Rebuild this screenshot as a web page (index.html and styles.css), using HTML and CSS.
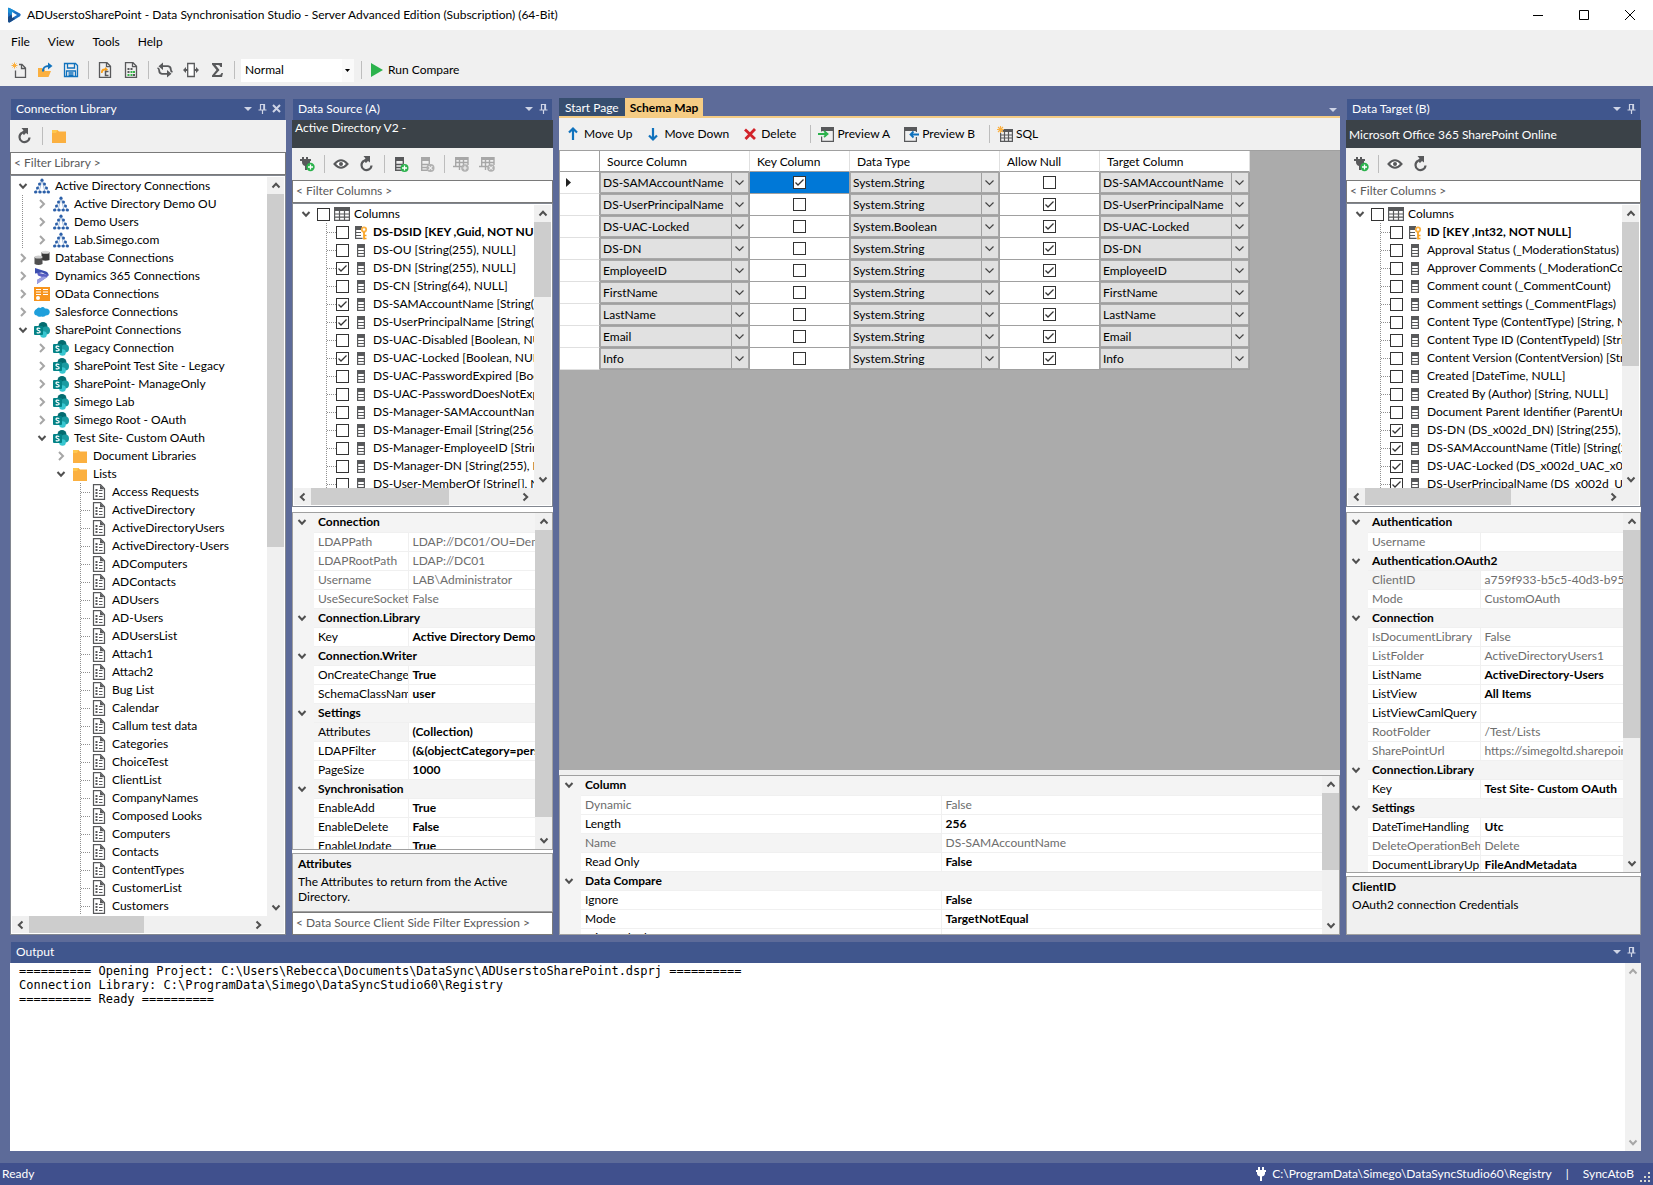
FILE: index.html
```html
<!DOCTYPE html>
<html lang="en">
<head>
<meta charset="utf-8">
<title>ADUserstoSharePoint - Data Synchronisation Studio</title>
<link rel="stylesheet" href="styles.css">
</head>
<body>
<svg class="sprite" aria-hidden="true">
  <symbol id="logo" viewBox="0 0 16 16"><path d="M2 1.5Q2 .2 3.4.9L14 6.6Q15.600 8 14 9.200L4 15.200Q2 16 2 14Z" fill="#1d6fc0"/><path d="M2 1.500Q2 .2 3.400.900L9 4 5 8 2 5Z" fill="#1b8fd6"/><path d="M2 10l3-2 4 4-5 3.200Q2 16 2 14Z" fill="#1a4a86"/><path d="M6 5l5 3-5 3Z" fill="#fff"/></symbol>
  <symbol id="new" viewBox="0 0 16 16"><path d="M3.500.5v6M.5 3.500h6M1.500 1.500l4 4M5.500 1.500l-4 4" stroke="#fbb040" fill="none"/><path d="M8 2.500h3l3.500 3.500v9.500h-10V8.500M10.500 2.500V6.500h4" stroke="#58595b" fill="none" stroke-width="1.300"/></symbol>
  <symbol id="open" viewBox="0 0 16 16"><path d="M1 6h4l1 1.500h2V9h6l-2.500 6H1z" fill="#fbb040"/><path d="M6 9.500C6 5 8 4 12 4" fill="none" stroke="#1072bd" stroke-width="2"/><path d="M11 .5L15.500 4 11 7.500z" fill="#1072bd"/></symbol>
  <symbol id="save" viewBox="0 0 16 16"><path d="M1.500 1.500h11l2 2v11h-13zM4.500 1.500v4.500h7V1.500M3.500 14.500V9h9v5.500M5.500 11h5M5.500 13h5" fill="none" stroke="#1072bd" stroke-width="1.300"/></symbol>
  <symbol id="pagec" viewBox="0 0 16 16"><path d="M2.500.7h7.500l3.500 3.500v11.100h-11zM9.500.7v4h4" fill="none" stroke="#58595b" stroke-width="1.300"/><path d="M4 11c0-4 2-4.500 4-4.500V5l3 2.500L8 10V8.500c-1.500 0-2 .5-2.500 2.500z" fill="#f9a01b"/><path d="M11.500 9.500h-3v4h3" fill="none" stroke="#58595b" stroke-width="1.500"/></symbol>
  <symbol id="pagegrid" viewBox="0 0 16 16"><path d="M2.500.7h7.500l3.500 3.500v11.100h-11zM9.500.7v4h4" fill="none" stroke="#58595b" stroke-width="1.300"/><path d="M4.500 6h2v2h-2zM7.500 6h2v2h-2zM4.500 9h2v2h-2zM10 12h2v2h-2z" fill="#58595b"/><path d="M7.500 9h2v2h-2zM10 9h2v2h-2zM7.500 12h2v2h-2zM4.500 12h2v2h-2z" fill="#39b54a"/></symbol>
  <symbol id="sync" viewBox="0 0 16 16"><path d="M5 4.200h6Q13.800 4.500 13.800 7.500 13.800 9.500 15.500 10" fill="none" stroke="#58595b" stroke-width="1.800"/><path d="M11 11.800H5Q2.200 11.500 2.200 8.500 2.200 6.500.5 6" fill="none" stroke="#58595b" stroke-width="1.800"/><path d="M6 .5v7.400L1.500 4.200zM10 8.100v7.400l4.500-3.700z" fill="#58595b"/></symbol>
  <symbol id="fit" viewBox="0 0 16 16"><path d="M4.700 1.500h6.600v13H4.700z" fill="#fff" stroke="#58595b" stroke-width="1.300"/><path d="M0 8l3-3v2h2v2H3v2zM16 8l-3-3v2h-2v2h2v2z" fill="#58595b"/></symbol>
  <symbol id="sigma" viewBox="0 0 16 16"><path d="M3 1h10v4h-1.500Q11 3 9 3H6.500l4 5-4.500 5H10q2 0 2.500-2H14l-1 4H3v-1.500L7.500 8 3 2.500z" fill="#58595b"/></symbol>
  <symbol id="play" viewBox="0 0 12 14"><path d="M0 0l12 7-12 7z" fill="#2bb24c"/></symbol>
  <symbol id="refresh" viewBox="0 0 16 16"><path d="M5.500 3.800A5 5 0 1 0 13 8.500" fill="none" stroke="#58595b" stroke-width="2.200" transform="translate(-.5 1)"/><path d="M4.500 0h6.500v6.500L9 5 7 7 4 4.500l2.500-2z" fill="#58595b"/></symbol>
  <symbol id="folder" viewBox="0 0 16 16"><path d="M1 2h5.500L8 3.500h7V15H1z" fill="#fbb040"/><path d="M1 2h5.500L5 5H1z" fill="#ffc74d"/></symbol>
  <symbol id="plugadd" viewBox="0 0 16 16"><path d="M3 1h2v2h2V1h2v2h3v2h-1v2q0 3-3 3v4H6v-4Q3 9 3 6V5H1V3h2z" fill="#58595b"/><circle cx="11.500" cy="11" r="4.200" fill="#2bb24c"/><path d="M11.500 8.500v5M9 11h5" stroke="#fff" stroke-width="1.300"/></symbol>
  <symbol id="plug" viewBox="0 0 12 14"><path d="M3 0h2v3h2V0h2v3h2v2h-1v2q-.5 2-3 2.500V14H5V9.500Q2.500 9 2 7V5H1V3h2z" fill="#fff"/></symbol>
  <symbol id="eye" viewBox="0 0 16 16"><path d="M1.500 8Q8 .5 14.500 8 8 15.500 1.500 8z" fill="#fff" stroke="#58595b" stroke-width="2"/><circle cx="8" cy="8" r="2" fill="#58595b"/></symbol>
  <symbol id="coladd" viewBox="0 0 16 16"><path d="M2 1h9v4H2z" fill="#58595b"/><path d="M2.700 2v12.300h6M10.300 2v6M3 8.500h7M3 11.500h5" fill="none" stroke="#58595b" stroke-width="1.400"/><circle cx="11.500" cy="12" r="4" fill="#2bb24c"/><path d="M11.500 9.500v5M9 12h5" stroke="#fff" stroke-width="1.300"/></symbol>
  <symbol id="coldel" viewBox="0 0 16 16"><path d="M2 1h9v4H2z" fill="#a7a7a7"/><path d="M2.700 2v12.300h6M10.300 2v6M3 8.500h7M3 11.500h5" fill="none" stroke="#a7a7a7" stroke-width="1.400"/><circle cx="11.500" cy="12" r="4" fill="#b0b0b0"/><path d="M9.700 10.200l3.600 3.600M13.300 10.200l-3.600 3.600" stroke="#f0f0f0" stroke-width="1.200"/></symbol>
  <symbol id="tabadd" viewBox="0 0 16 16"><path d="M2 1h13v3H2z" fill="#a7a7a7"/><path d="M2.700 1v10M15 1v8M6.500 3v11M10.500 3v6M2 6.500h13M0 10.500h9" fill="none" stroke="#a7a7a7" stroke-width="1.400"/><circle cx="12" cy="12" r="3.800" fill="#b0b0b0"/><path d="M12 9.800v4.400M9.800 12h4.400" stroke="#f0f0f0" stroke-width="1.200"/></symbol>
  <symbol id="tabdel" viewBox="0 0 16 16"><path d="M2 1h13v3H2z" fill="#a7a7a7"/><path d="M2.700 1v10M15 1v8M6.500 3v11M10.500 3v6M2 6.500h13M0 10.500h9" fill="none" stroke="#a7a7a7" stroke-width="1.400"/><circle cx="12" cy="12" r="3.800" fill="#b0b0b0"/><path d="M10.400 10.400l3.200 3.200M13.600 10.400l-3.200 3.200" stroke="#f0f0f0" stroke-width="1.200"/></symbol>
  <symbol id="table" viewBox="0 0 16 16"><path d="M0 1h16v4H0z" fill="#58595b"/><path d="M.6 2v12.400h14.800V2M5.500 5v9M10.500 5v9M1 8h14M1 11.200h14" fill="none" stroke="#58595b" stroke-width="1.200"/></symbol>
  <symbol id="col" viewBox="0 0 16 16"><path d="M4 2h8v3H4z" fill="#58595b"/><path d="M4.600 3v11.400h6.800V3M5 8.500h6M5 11.500h6M5 5.500h6" fill="none" stroke="#58595b" stroke-width="1.200"/></symbol>
  <symbol id="key" viewBox="0 0 16 16"><path d="M2 2h7v3H2z" fill="#58595b"/><path d="M2.600 3v11.400h7M2 8.500h6M2 11.500h6M2 5.500h6" fill="none" stroke="#58595b" stroke-width="1.200"/><circle cx="11" cy="5.500" r="2.200" fill="none" stroke="#fbb040" stroke-width="1.800"/><path d="M11 8v7.500M11 11.500h2.500M11 14.500h2.500" stroke="#f9a01b" stroke-width="1.700"/></symbol>
  <symbol id="doc" viewBox="0 0 16 16"><path d="M2.500.7h7l4 4v10.600h-11z" fill="none" stroke="#58595b" stroke-width="1.200"/><path d="M9 .7v4.500h4.500z" fill="#58595b"/><path d="M4.500 6h2M4.500 9h2M4.500 12h2" stroke="#58595b" stroke-width="1.800"/><path d="M8 6.500h3.500M8 9.500h3.500M8 12.500h3.500" stroke="#58595b"/></symbol>
  <symbol id="ad" viewBox="0 0 16 16"><path d="M8 2L1.500 14h13zM8 2L5 14M8 2l3 12" fill="none" stroke="#a9c0de"/><g fill="#2b5fa8"><circle cx="8" cy="2.200" r="1.600"/><circle cx="5.500" cy="6" r="1.500"/><circle cx="10.500" cy="6" r="1.500"/><circle cx="3.500" cy="10" r="1.500"/><circle cx="12.500" cy="10" r="1.500"/><circle cx="1.600" cy="14" r="1.600"/><circle cx="6" cy="14" r="1.600"/><circle cx="10.200" cy="14" r="1.600"/><circle cx="14.400" cy="14" r="1.600"/></g></symbol>
  <symbol id="db" viewBox="0 0 16 16"><path d="M7.500 2v8q4 1.500 8 0V2z" fill="#3a3a3a"/><ellipse cx="11.500" cy="2.200" rx="4" ry="1.500" fill="#ddd"/><path d="M.5 7v7q4 2 8 0V7z" fill="#505050"/><ellipse cx="4.500" cy="7" rx="4" ry="1.500" fill="#ccc"/></symbol>
  <symbol id="dyn" viewBox="0 0 16 16"><path d="M1 0l11 3.500Q15 5 14.500 8L8 4.500 1 5.500z" fill="#3c4fb0"/><path d="M14.500 6.500Q14 9 11 10.500L3 16v-4l5-3-4-1.500L3 4.500l9 2z" fill="#5a5fc4"/><path d="M3 16v-4l6-3.500 4.500.5z" fill="#9a9ee0"/></symbol>
  <symbol id="odata" viewBox="0 0 16 16"><path d="M0 1h16v14H0z" fill="#f7941d"/><path d="M2 3.500h5M2 6h5M2 8.500h5M9 3.500h5M9 6h5M9 8.500h5" stroke="#fff" stroke-width="1.200"/><circle cx="4" cy="12" r="2" fill="#fff"/></symbol>
  <symbol id="sf" viewBox="0 0 16 16"><path d="M2.500 5Q4 2.500 6.500 4q2.500-2 4.500.5Q15.500 4 15.800 8q-.5 3.500-4 3.500-2 2-4.500 1Q4 13.500 3 11.500-.5 11 .3 7.500.8 5.500 2.500 5z" fill="#1e9fdb"/></symbol>
  <symbol id="sp" viewBox="0 0 16 16"><circle cx="9" cy="4.500" r="4.500" fill="#036c70"/><circle cx="12" cy="8.500" r="4" fill="#1a9ba1"/><circle cx="9.500" cy="12.500" r="3.300" fill="#37c6d0"/><rect y="4" width="9" height="9" rx="1" fill="#038387"/><path d="M6.300 6.500Q3 5.500 3 7.300C3 8.800 6.200 8.200 6.200 10 6 11.400 3.500 11 2.700 10.500" fill="none" stroke="#fff" stroke-width="1.200"/></symbol>
  <symbol id="arrup" viewBox="0 0 16 16"><path d="M8 2v12M4 6.500l4-4 4 4" fill="none" stroke="#1072bd" stroke-width="2.200"/></symbol>
  <symbol id="arrdn" viewBox="0 0 16 16"><path d="M8 2v12M4 9.500l4 4 4-4" fill="none" stroke="#1072bd" stroke-width="2.200"/></symbol>
  <symbol id="cross" viewBox="0 0 16 16"><path d="M3 3.500l10 9.500M13 3l-9.500 10" fill="none" stroke="#d2232a" stroke-width="2.800"/></symbol>
  <symbol id="preva" viewBox="0 0 16 16"><path d="M3 1h13v4H3z" fill="#58595b"/><path d="M3.600 5.500V2M3.600 10.500v4.900h11.800V2" fill="none" stroke="#58595b" stroke-width="1.200"/><path d="M0 8h8M6 5l3.500 3L6 11" fill="none" stroke="#2bb24c" stroke-width="1.800"/></symbol>
  <symbol id="prevb" viewBox="0 0 16 16"><path d="M1 1h13v4H1z" fill="#58595b"/><path d="M1.600 2v13.400h11.800V11M13.400 2v4" fill="none" stroke="#58595b" stroke-width="1.200"/><path d="M16 8.500H8M10.500 5.500L7.500 8.500l3 3" fill="none" stroke="#1072bd" stroke-width="1.800"/></symbol>
  <symbol id="sql" viewBox="0 0 16 16"><path d="M7 3h9v3H4z" fill="#58595b"/><path d="M3.600 7v8.400h11.800V4M7.500 6v9M11.500 6v9M3 9h12M3 12h12" fill="none" stroke="#58595b" stroke-width="1.200"/><path d="M3.500 0v7M0 3.500h7M1 1l5 5M6 1L1 6" stroke="#fbb040" stroke-width="1.100"/></symbol>
  <symbol id="cu" viewBox="0 0 10 10"><path d="M1.500 7L5 3.300 8.500 7" fill="none" stroke="#505050" stroke-width="2"/></symbol>
  <symbol id="cd" viewBox="0 0 10 10"><path d="M1.500 3L5 6.700 8.500 3" fill="none" stroke="#505050" stroke-width="2"/></symbol>
  <symbol id="cl" viewBox="0 0 10 10"><path d="M7 1.500L3.300 5 7 8.500" fill="none" stroke="#505050" stroke-width="2"/></symbol>
  <symbol id="cr" viewBox="0 0 10 10"><path d="M3 1.500L6.700 5 3 8.500" fill="none" stroke="#505050" stroke-width="2"/></symbol>
  <symbol id="er" viewBox="0 0 10 10"><path d="M3 1L7 5 3 9" fill="none" stroke="#a6a6a6" stroke-width="2"/></symbol>
  <symbol id="tri" viewBox="0 0 8 4"><path d="M0 0h8L4 4z" fill="#ced4e6"/></symbol>
  <symbol id="pin" viewBox="0 0 9 10"><path d="M2.500 6V.5h4V6M5.800 0v6M.5 6h8M4.500 6v4" fill="none" stroke="#ced4e6" stroke-width="1.200"/></symbol>
  <symbol id="close" viewBox="0 0 9 9"><path d="M1 1l7 7M8 1L1 8" fill="none" stroke="#ced4e6" stroke-width="2"/></symbol>
</svg>

<div class="app">
<header class="titlebar">
  <svg class="ic"><use href="#logo"/></svg>
  <h1>ADUserstoSharePoint - Data Synchronisation Studio - Server Advanced Edition (Subscription) (64-Bit)</h1>
  <button class="win" aria-label="Minimize"><svg width="10" height="10"><path d="M0 5.500h10" stroke="#000"/></svg></button>
  <button class="win" aria-label="Maximize"><svg width="10" height="10"><path d="M.5.5h9v9h-9z" fill="none" stroke="#000"/></svg></button>
  <button class="win" aria-label="Close"><svg width="10" height="10"><path d="M0 0l10 10M10 0L0 10" stroke="#000"/></svg></button>
</header>
<nav class="menubar"><button>File</button><button>View</button><button>Tools</button><button>Help</button></nav>
<div class="tools main-tools">
  <button aria-label="New"><svg class="ic"><use href="#new"/></svg></button>
  <button aria-label="Open"><svg class="ic"><use href="#open"/></svg></button>
  <button aria-label="Save"><svg class="ic"><use href="#save"/></svg></button>
  <span class="sep"></span>
  <button aria-label="Project properties"><svg class="ic"><use href="#pagec"/></svg></button>
  <button aria-label="Data preview"><svg class="ic"><use href="#pagegrid"/></svg></button>
  <span class="sep"></span>
  <button aria-label="Swap"><svg class="ic"><use href="#sync"/></svg></button>
  <button aria-label="Fit columns"><svg class="ic"><use href="#fit"/></svg></button>
  <button aria-label="Sum"><svg class="ic"><use href="#sigma"/></svg></button>
  <span class="sep"></span>
  <select class="mode" aria-label="Mode"><option>Normal</option></select>
  <span class="sep"></span>
  <button class="run"><svg width="12" height="14"><use href="#play"/></svg>Run Compare</button>
</div>

<main class="work">
<section class="dock">
  <header class="cap"><h2>Connection Library</h2><button aria-label="Options"><svg width="8" height="4"><use href="#tri"/></svg></button><button aria-label="Pin"><svg width="9" height="10"><use href="#pin"/></svg></button><button aria-label="Close"><svg width="9" height="9"><use href="#close"/></svg></button></header>
  <div class="tools">
    <button aria-label="Refresh"><svg class="ic"><use href="#refresh"/></svg></button><span class="sep"></span>
    <button aria-label="Folder"><svg class="ic"><use href="#folder"/></svg></button>
  </div>
  <input class="filter" placeholder="&lt; Filter Library &gt;" aria-label="Filter library">
  <div class="box tree library">
    <ul class="view">
      <li><span class="node"><svg class="ex"><use href="#cd"/></svg><svg class="ic"><use href="#ad"/></svg>Active Directory Connections</span>
        <ul class="line">
          <li><span class="node"><svg class="ex"><use href="#er"/></svg><svg class="ic"><use href="#ad"/></svg>Active Directory Demo OU</span></li>
          <li><span class="node"><svg class="ex"><use href="#er"/></svg><svg class="ic"><use href="#ad"/></svg>Demo Users</span></li>
          <li><span class="node"><svg class="ex"><use href="#er"/></svg><svg class="ic"><use href="#ad"/></svg>Lab.Simego.com</span></li>
        </ul></li>
      <li><span class="node"><svg class="ex"><use href="#er"/></svg><svg class="ic"><use href="#db"/></svg>Database Connections</span></li>
      <li><span class="node"><svg class="ex"><use href="#er"/></svg><svg class="ic"><use href="#dyn"/></svg>Dynamics 365 Connections</span></li>
      <li><span class="node"><svg class="ex"><use href="#er"/></svg><svg class="ic"><use href="#odata"/></svg>OData Connections</span></li>
      <li><span class="node"><svg class="ex"><use href="#er"/></svg><svg class="ic"><use href="#sf"/></svg>Salesforce Connections</span></li>
      <li><span class="node"><svg class="ex"><use href="#cd"/></svg><svg class="ic"><use href="#sp"/></svg>SharePoint Connections</span>
        <ul>
          <li><span class="node"><svg class="ex"><use href="#er"/></svg><svg class="ic"><use href="#sp"/></svg>Legacy Connection</span></li>
          <li><span class="node"><svg class="ex"><use href="#er"/></svg><svg class="ic"><use href="#sp"/></svg>SharePoint Test Site - Legacy</span></li>
          <li><span class="node"><svg class="ex"><use href="#er"/></svg><svg class="ic"><use href="#sp"/></svg>SharePoint- ManageOnly</span></li>
          <li><span class="node"><svg class="ex"><use href="#er"/></svg><svg class="ic"><use href="#sp"/></svg>Simego Lab</span></li>
          <li><span class="node"><svg class="ex"><use href="#er"/></svg><svg class="ic"><use href="#sp"/></svg>Simego Root - OAuth</span></li>
          <li><span class="node"><svg class="ex"><use href="#cd"/></svg><svg class="ic"><use href="#sp"/></svg>Test Site- Custom OAuth</span>
            <ul>
              <li><span class="node"><svg class="ex"><use href="#er"/></svg><svg class="ic"><use href="#folder"/></svg>Document Libraries</span></li>
              <li><span class="node"><svg class="ex"><use href="#cd"/></svg><svg class="ic"><use href="#folder"/></svg>Lists</span>
                <ul class="leaves">
                  <li><svg class="ic"><use href="#doc"/></svg>Access Requests</li>
                  <li><svg class="ic"><use href="#doc"/></svg>ActiveDirectory</li>
                  <li><svg class="ic"><use href="#doc"/></svg>ActiveDirectoryUsers</li>
                  <li><svg class="ic"><use href="#doc"/></svg>ActiveDirectory-Users</li>
                  <li><svg class="ic"><use href="#doc"/></svg>ADComputers</li>
                  <li><svg class="ic"><use href="#doc"/></svg>ADContacts</li>
                  <li><svg class="ic"><use href="#doc"/></svg>ADUsers</li>
                  <li><svg class="ic"><use href="#doc"/></svg>AD-Users</li>
                  <li><svg class="ic"><use href="#doc"/></svg>ADUsersList</li>
                  <li><svg class="ic"><use href="#doc"/></svg>Attach1</li>
                  <li><svg class="ic"><use href="#doc"/></svg>Attach2</li>
                  <li><svg class="ic"><use href="#doc"/></svg>Bug List</li>
                  <li><svg class="ic"><use href="#doc"/></svg>Calendar</li>
                  <li><svg class="ic"><use href="#doc"/></svg>Callum test data</li>
                  <li><svg class="ic"><use href="#doc"/></svg>Categories</li>
                  <li><svg class="ic"><use href="#doc"/></svg>ChoiceTest</li>
                  <li><svg class="ic"><use href="#doc"/></svg>ClientList</li>
                  <li><svg class="ic"><use href="#doc"/></svg>CompanyNames</li>
                  <li><svg class="ic"><use href="#doc"/></svg>Composed Looks</li>
                  <li><svg class="ic"><use href="#doc"/></svg>Computers</li>
                  <li><svg class="ic"><use href="#doc"/></svg>Contacts</li>
                  <li><svg class="ic"><use href="#doc"/></svg>ContentTypes</li>
                  <li><svg class="ic"><use href="#doc"/></svg>CustomerList</li>
                  <li><svg class="ic"><use href="#doc"/></svg>Customers</li>
                </ul></li>
            </ul></li>
        </ul></li>
    </ul>
    <div class="vbar"><svg class="ar"><use href="#cu"/></svg><div class="track"><i style="height:50%"></i></div><svg class="ar"><use href="#cd"/></svg></div>
    <div class="hbar"><svg class="ar"><use href="#cl"/></svg><div class="track"><i style="width:52%"></i></div><svg class="ar"><use href="#cr"/></svg></div>
  </div>
</section>

<section class="dock">
  <header class="cap"><h2>Data Source (A)</h2><button aria-label="Options"><svg width="8" height="4"><use href="#tri"/></svg></button><button aria-label="Pin"><svg width="9" height="10"><use href="#pin"/></svg></button></header>
  <p class="conn top">Active Directory V2 -</p>
  <div class="tools">
    <button aria-label="Connect"><svg class="ic"><use href="#plugadd"/></svg></button><span class="sep"></span>
    <button aria-label="Preview"><svg class="ic"><use href="#eye"/></svg></button>
    <button aria-label="Refresh"><svg class="ic"><use href="#refresh"/></svg></button><span class="sep"></span>
    <button aria-label="Add column"><svg class="ic"><use href="#coladd"/></svg></button>
    <button aria-label="Remove column" disabled><svg class="ic"><use href="#coldel"/></svg></button><span class="sep"></span>
    <button aria-label="Add lookup" disabled><svg class="ic"><use href="#tabadd"/></svg></button>
    <button aria-label="Remove lookup" disabled><svg class="ic"><use href="#tabdel"/></svg></button>
  </div>
  <input class="filter" placeholder="&lt; Filter Columns &gt;" aria-label="Filter source columns">
  <div class="box tree columns">
    <ul class="view">
      <li><span class="node"><svg class="ex"><use href="#cd"/></svg><label><input type="checkbox"><svg class="ic"><use href="#table"/></svg>Columns</label></span>
        <ul class="checks">
          <li><label class="pk"><input type="checkbox"><svg class="ic"><use href="#key"/></svg>DS-DSID [KEY ,Guid, NOT NULL]</label></li>
          <li><label><input type="checkbox"><svg class="ic"><use href="#col"/></svg>DS-OU [String(255), NULL]</label></li>
          <li><label><input type="checkbox" checked><svg class="ic"><use href="#col"/></svg>DS-DN [String(255), NULL]</label></li>
          <li><label><input type="checkbox"><svg class="ic"><use href="#col"/></svg>DS-CN [String(64), NULL]</label></li>
          <li><label><input type="checkbox" checked><svg class="ic"><use href="#col"/></svg>DS-SAMAccountName [String(256), NULL]</label></li>
          <li><label><input type="checkbox" checked><svg class="ic"><use href="#col"/></svg>DS-UserPrincipalName [String(255), NULL]</label></li>
          <li><label><input type="checkbox"><svg class="ic"><use href="#col"/></svg>DS-UAC-Disabled [Boolean, NULL]</label></li>
          <li><label><input type="checkbox" checked><svg class="ic"><use href="#col"/></svg>DS-UAC-Locked [Boolean, NULL]</label></li>
          <li><label><input type="checkbox"><svg class="ic"><use href="#col"/></svg>DS-UAC-PasswordExpired [Boolean, NULL]</label></li>
          <li><label><input type="checkbox"><svg class="ic"><use href="#col"/></svg>DS-UAC-PasswordDoesNotExpire [Boolean, NULL]</label></li>
          <li><label><input type="checkbox"><svg class="ic"><use href="#col"/></svg>DS-Manager-SAMAccountName [String(256), NULL]</label></li>
          <li><label><input type="checkbox"><svg class="ic"><use href="#col"/></svg>DS-Manager-Email [String(256), NULL]</label></li>
          <li><label><input type="checkbox"><svg class="ic"><use href="#col"/></svg>DS-Manager-EmployeeID [String(255), NULL]</label></li>
          <li><label><input type="checkbox"><svg class="ic"><use href="#col"/></svg>DS-Manager-DN [String(255), NULL]</label></li>
          <li><label><input type="checkbox"><svg class="ic"><use href="#col"/></svg>DS-User-MemberOf [String[], NULL]</label></li>
        </ul></li>
    </ul>
    <div class="vbar"><svg class="ar"><use href="#cu"/></svg><div class="track"><i style="height:30%"></i></div><svg class="ar"><use href="#cd"/></svg></div>
    <div class="hbar"><svg class="ar"><use href="#cl"/></svg><div class="track"><i style="width:67%"></i></div><svg class="ar"><use href="#cr"/></svg></div>
  </div>
  <div class="box grid">
    <div class="view"><table class="props narrow">
      <colgroup><col class="g"><col class="n"><col></colgroup>
      <tbody>
      <tr class="cat"><td><svg class="ex"><use href="#cd"/></svg></td><th colspan="2">Connection</th></tr>
      <tr class="ro"><td></td><th>LDAPPath</th><td>LDAP://DC01/OU=Demo</td></tr>
      <tr class="ro"><td></td><th>LDAPRootPath</th><td>LDAP://DC01</td></tr>
      <tr class="ro"><td></td><th>Username</th><td>LAB\Administrator</td></tr>
      <tr class="ro"><td></td><th>UseSecureSocket</th><td>False</td></tr>
      <tr class="cat"><td><svg class="ex"><use href="#cd"/></svg></td><th colspan="2">Connection.Library</th></tr>
      <tr><td></td><th>Key</th><td>Active Directory Demo OU</td></tr>
      <tr class="cat"><td><svg class="ex"><use href="#cd"/></svg></td><th colspan="2">Connection.Writer</th></tr>
      <tr><td></td><th>OnCreateChange</th><td>True</td></tr>
      <tr><td></td><th>SchemaClassNam</th><td>user</td></tr>
      <tr class="cat"><td><svg class="ex"><use href="#cd"/></svg></td><th colspan="2">Settings</th></tr>
      <tr class="sel"><td></td><th>Attributes</th><td>(Collection)</td></tr>
      <tr><td></td><th>LDAPFilter</th><td>(&amp;(objectCategory=person)</td></tr>
      <tr><td></td><th>PageSize</th><td>1000</td></tr>
      <tr class="cat"><td><svg class="ex"><use href="#cd"/></svg></td><th colspan="2">Synchronisation</th></tr>
      <tr><td></td><th>EnableAdd</th><td>True</td></tr>
      <tr><td></td><th>EnableDelete</th><td>False</td></tr>
      <tr><td></td><th>EnableUpdate</th><td>True</td></tr>
      </tbody>
    </table></div>
    <div class="vbar"><svg class="ar"><use href="#cu"/></svg><div class="track"><i style="height:95%"></i></div><svg class="ar"><use href="#cd"/></svg></div>
  </div>
  <div class="box desc"><h3>Attributes</h3><p>The Attributes to return from the Active Directory.</p></div>
  <input class="filter" placeholder="&lt; Data Source Client Side Filter Expression &gt;" aria-label="Data source filter expression">
</section>

<section class="centre">
  <div class="tabs" role="tablist"><button role="tab">Start Page</button><button role="tab" aria-selected="true" class="on">Schema Map</button><button class="more" aria-label="More tabs"><svg width="8" height="4"><use href="#tri"/></svg></button></div>
  <div class="tools labelled">
    <button><svg class="ic"><use href="#arrup"/></svg>Move Up</button>
    <button><svg class="ic"><use href="#arrdn"/></svg>Move Down</button>
    <button><svg class="ic"><use href="#cross"/></svg>Delete</button>
    <span class="sep"></span>
    <button><svg class="ic"><use href="#preva"/></svg>Preview A</button>
    <button><svg class="ic"><use href="#prevb"/></svg>Preview B</button>
    <span class="sep"></span>
    <button><svg class="ic"><use href="#sql"/></svg>SQL</button>
  </div>
  <div class="canvas">
    <table class="map">
      <colgroup><col class="c0"><col class="c1"><col class="c2"><col class="c1"><col class="c2"><col class="c1"></colgroup>
      <thead><tr><td></td><th>Source Column</th><th>Key Column</th><th>Data Type</th><th>Allow Null</th><th>Target Column</th></tr></thead>
      <tbody>
      <tr><td><svg width="5" height="9"><path d="M0 0l5 4.500L0 9z" fill="#222"/></svg></td><td><select aria-label="Source column"><option>DS-SAMAccountName</option></select></td><td class="cur"><input type="checkbox" aria-label="Key column" checked></td><td><select aria-label="Data type"><option>System.String</option></select></td><td><input type="checkbox" aria-label="Allow null"></td><td><select aria-label="Target column"><option>DS-SAMAccountName</option></select></td></tr>
      <tr><td></td><td><select aria-label="Source column"><option>DS-UserPrincipalName</option></select></td><td><input type="checkbox" aria-label="Key column"></td><td><select aria-label="Data type"><option>System.String</option></select></td><td><input type="checkbox" aria-label="Allow null" checked></td><td><select aria-label="Target column"><option>DS-UserPrincipalName</option></select></td></tr>
      <tr><td></td><td><select aria-label="Source column"><option>DS-UAC-Locked</option></select></td><td><input type="checkbox" aria-label="Key column"></td><td><select aria-label="Data type"><option>System.Boolean</option></select></td><td><input type="checkbox" aria-label="Allow null" checked></td><td><select aria-label="Target column"><option>DS-UAC-Locked</option></select></td></tr>
      <tr><td></td><td><select aria-label="Source column"><option>DS-DN</option></select></td><td><input type="checkbox" aria-label="Key column"></td><td><select aria-label="Data type"><option>System.String</option></select></td><td><input type="checkbox" aria-label="Allow null" checked></td><td><select aria-label="Target column"><option>DS-DN</option></select></td></tr>
      <tr><td></td><td><select aria-label="Source column"><option>EmployeeID</option></select></td><td><input type="checkbox" aria-label="Key column"></td><td><select aria-label="Data type"><option>System.String</option></select></td><td><input type="checkbox" aria-label="Allow null" checked></td><td><select aria-label="Target column"><option>EmployeeID</option></select></td></tr>
      <tr><td></td><td><select aria-label="Source column"><option>FirstName</option></select></td><td><input type="checkbox" aria-label="Key column"></td><td><select aria-label="Data type"><option>System.String</option></select></td><td><input type="checkbox" aria-label="Allow null" checked></td><td><select aria-label="Target column"><option>FirstName</option></select></td></tr>
      <tr><td></td><td><select aria-label="Source column"><option>LastName</option></select></td><td><input type="checkbox" aria-label="Key column"></td><td><select aria-label="Data type"><option>System.String</option></select></td><td><input type="checkbox" aria-label="Allow null" checked></td><td><select aria-label="Target column"><option>LastName</option></select></td></tr>
      <tr><td></td><td><select aria-label="Source column"><option>Email</option></select></td><td><input type="checkbox" aria-label="Key column"></td><td><select aria-label="Data type"><option>System.String</option></select></td><td><input type="checkbox" aria-label="Allow null" checked></td><td><select aria-label="Target column"><option>Email</option></select></td></tr>
      <tr><td></td><td><select aria-label="Source column"><option>Info</option></select></td><td><input type="checkbox" aria-label="Key column"></td><td><select aria-label="Data type"><option>System.String</option></select></td><td><input type="checkbox" aria-label="Allow null" checked></td><td><select aria-label="Target column"><option>Info</option></select></td></tr>
      </tbody>
    </table>
  </div>
  <div class="box grid detail">
    <div class="view"><table class="props wide">
      <colgroup><col class="g"><col class="n"><col></colgroup>
      <tbody>
      <tr class="cat"><td><svg class="ex"><use href="#cd"/></svg></td><th colspan="2">Column</th></tr>
      <tr class="ro"><td></td><th>Dynamic</th><td>False</td></tr>
      <tr><td></td><th>Length</th><td>256</td></tr>
      <tr class="ro sel"><td></td><th>Name</th><td>DS-SAMAccountName</td></tr>
      <tr><td></td><th>Read Only</th><td>False</td></tr>
      <tr class="cat"><td><svg class="ex"><use href="#cd"/></svg></td><th colspan="2">Data Compare</th></tr>
      <tr><td></td><th>Ignore</th><td>False</td></tr>
      <tr><td></td><th>Mode</th><td>TargetNotEqual</td></tr>
      <tr><td></td><th>TrimmedValue</th><td>True</td></tr>
      </tbody>
    </table></div>
    <div class="vbar"><svg class="ar"><use href="#cu"/></svg><div class="track"><i style="height:62%"></i></div><svg class="ar"><use href="#cd"/></svg></div>
  </div>
</section>

<section class="dock">
  <header class="cap"><h2>Data Target (B)</h2><button aria-label="Options"><svg width="8" height="4"><use href="#tri"/></svg></button><button aria-label="Pin"><svg width="9" height="10"><use href="#pin"/></svg></button></header>
  <p class="conn">Microsoft Office 365 SharePoint Online</p>
  <div class="tools">
    <button aria-label="Connect"><svg class="ic"><use href="#plugadd"/></svg></button><span class="sep"></span>
    <button aria-label="Preview"><svg class="ic"><use href="#eye"/></svg></button>
    <button aria-label="Refresh"><svg class="ic"><use href="#refresh"/></svg></button>
  </div>
  <input class="filter" placeholder="&lt; Filter Columns &gt;" aria-label="Filter target columns">
  <div class="box tree columns">
    <ul class="view">
      <li><span class="node"><svg class="ex"><use href="#cd"/></svg><label><input type="checkbox"><svg class="ic"><use href="#table"/></svg>Columns</label></span>
        <ul class="checks">
          <li><label class="pk"><input type="checkbox"><svg class="ic"><use href="#key"/></svg>ID [KEY ,Int32, NOT NULL]</label></li>
          <li><label><input type="checkbox"><svg class="ic"><use href="#col"/></svg>Approval Status (_ModerationStatus)</label></li>
          <li><label><input type="checkbox"><svg class="ic"><use href="#col"/></svg>Approver Comments (_ModerationComments)</label></li>
          <li><label><input type="checkbox"><svg class="ic"><use href="#col"/></svg>Comment count (_CommentCount)</label></li>
          <li><label><input type="checkbox"><svg class="ic"><use href="#col"/></svg>Comment settings (_CommentFlags)</label></li>
          <li><label><input type="checkbox"><svg class="ic"><use href="#col"/></svg>Content Type (ContentType) [String, NULL]</label></li>
          <li><label><input type="checkbox"><svg class="ic"><use href="#col"/></svg>Content Type ID (ContentTypeId) [String, NULL]</label></li>
          <li><label><input type="checkbox"><svg class="ic"><use href="#col"/></svg>Content Version (ContentVersion) [String, NULL]</label></li>
          <li><label><input type="checkbox"><svg class="ic"><use href="#col"/></svg>Created [DateTime, NULL]</label></li>
          <li><label><input type="checkbox"><svg class="ic"><use href="#col"/></svg>Created By (Author) [String, NULL]</label></li>
          <li><label><input type="checkbox"><svg class="ic"><use href="#col"/></svg>Document Parent Identifier (ParentUniqueId)</label></li>
          <li><label><input type="checkbox" checked><svg class="ic"><use href="#col"/></svg>DS-DN (DS_x002d_DN) [String(255), NULL]</label></li>
          <li><label><input type="checkbox" checked><svg class="ic"><use href="#col"/></svg>DS-SAMAccountName (Title) [String(255), NULL]</label></li>
          <li><label><input type="checkbox" checked><svg class="ic"><use href="#col"/></svg>DS-UAC-Locked (DS_x002d_UAC_x002d_Locked)</label></li>
          <li><label><input type="checkbox" checked><svg class="ic"><use href="#col"/></svg>DS-UserPrincipalName (DS_x002d_UserPrincipalName)</label></li>
        </ul></li>
    </ul>
    <div class="vbar"><svg class="ar"><use href="#cu"/></svg><div class="track"><i style="height:58%"></i></div><svg class="ar"><use href="#cd"/></svg></div>
    <div class="hbar"><svg class="ar"><use href="#cl"/></svg><div class="track"><i style="width:61%"></i></div><svg class="ar"><use href="#cr"/></svg></div>
  </div>
  <div class="box grid">
    <div class="view"><table class="props medium">
      <colgroup><col class="g"><col class="n"><col></colgroup>
      <tbody>
      <tr class="cat"><td><svg class="ex"><use href="#cd"/></svg></td><th colspan="2">Authentication</th></tr>
      <tr class="ro"><td></td><th>Username</th><td></td></tr>
      <tr class="cat"><td><svg class="ex"><use href="#cd"/></svg></td><th colspan="2">Authentication.OAuth2</th></tr>
      <tr class="ro sel"><td></td><th>ClientID</th><td>a759f933-b5c5-40d3-b955-</td></tr>
      <tr class="ro"><td></td><th>Mode</th><td>CustomOAuth</td></tr>
      <tr class="cat"><td><svg class="ex"><use href="#cd"/></svg></td><th colspan="2">Connection</th></tr>
      <tr class="ro"><td></td><th>IsDocumentLibrary</th><td>False</td></tr>
      <tr class="ro"><td></td><th>ListFolder</th><td>ActiveDirectoryUsers1</td></tr>
      <tr><td></td><th>ListName</th><td>ActiveDirectory-Users</td></tr>
      <tr><td></td><th>ListView</th><td>All Items</td></tr>
      <tr><td></td><th>ListViewCamlQuery</th><td></td></tr>
      <tr class="ro"><td></td><th>RootFolder</th><td>/Test/Lists</td></tr>
      <tr class="ro"><td></td><th>SharePointUrl</th><td>https://simegoltd.sharepoint.com</td></tr>
      <tr class="cat"><td><svg class="ex"><use href="#cd"/></svg></td><th colspan="2">Connection.Library</th></tr>
      <tr><td></td><th>Key</th><td>Test Site- Custom OAuth</td></tr>
      <tr class="cat"><td><svg class="ex"><use href="#cd"/></svg></td><th colspan="2">Settings</th></tr>
      <tr><td></td><th>DateTimeHandling</th><td>Utc</td></tr>
      <tr class="ro"><td></td><th>DeleteOperationBeh</th><td>Delete</td></tr>
      <tr><td></td><th>DocumentLibraryUp</th><td>FileAndMetadata</td></tr>
      </tbody>
    </table></div>
    <div class="vbar"><svg class="ar"><use href="#cu"/></svg><div class="track"><i style="height:64%"></i></div><svg class="ar"><use href="#cd"/></svg></div>
  </div>
  <div class="box desc"><h3>ClientID</h3><p>OAuth2 connection Credentials</p></div>
</section>

<section class="dock output">
  <header class="cap"><h2>Output</h2><button aria-label="Options"><svg width="8" height="4"><use href="#tri"/></svg></button><button aria-label="Pin"><svg width="9" height="10"><use href="#pin"/></svg></button></header>
  <div class="console">
    <pre>========== Opening Project: C:\Users\Rebecca\Documents\DataSync\ADUserstoSharePoint.dsprj ==========
Connection Library: C:\ProgramData\Simego\DataSyncStudio60\Registry
========== Ready ==========</pre>
    <div class="vbar idle"><svg class="ar"><use href="#cu"/></svg><div class="track"></div><svg class="ar"><use href="#cd"/></svg></div>
  </div>
</section>
</main>

<footer class="status">
  <span class="grow">Ready</span>
  <svg width="12" height="14"><use href="#plug"/></svg>
  <span>C:\ProgramData\Simego\DataSyncStudio60\Registry</span>
  <span class="bar">|</span>
  <span>SyncAtoB</span>
  <svg width="11" height="11"><path d="M8 0h2v2H8zM4 4h2v2H4zM8 4h2v2H8zM0 8h2v2H0zM4 8h2v2H4zM8 8h2v2H8z" fill="#d9d9d0"/></svg>
</footer>
</div>
</body>
</html>
```

FILE: styles.css
```css
* { box-sizing: border-box; }
body, h1, h2, h3, p, ul, pre { margin: 0; padding: 0; }
body { font: 12px/16px Lato, "Noto Sans", sans-serif; color: #000; }
h1, h2 { font: inherit; }
ul { list-style: none; }
button { font: inherit; color: inherit; border: 0; padding: 0; background: none; display: flex; align-items: center; justify-content: center; }
select, input { font: inherit; color: inherit; margin: 0; border-radius: 0; }
svg { display: block; flex: none; }
.sprite { position: absolute; width: 0; height: 0; }
.ic { width: 16px; height: 16px; }

.app { display: flex; flex-direction: column; height: 100vh; min-height: 700px; background: #5d6b99; overflow: hidden; }

.titlebar { display: flex; align-items: center; height: 30px; padding-left: 6px; gap: 5px; background: #fff; }
.titlebar h1 { flex: 1; }
.win { width: 46px; height: 30px; margin-left: -5px; }
.menubar { display: flex; align-items: center; height: 24px; padding-left: 5px; gap: 6px; background: #f0f0f0; }
.menubar button { padding: 0 6px; }

.tools { display: flex; align-items: center; flex: none; height: 32px; padding-left: 2px; background: #f0f0f0; }
.tools button { width: 26px; height: 24px; flex: none; }
.sep { width: 1px; height: 18px; margin: 0 3px 0 4px; background: #bdbdbd; }
.main-tools { padding-left: 6px; }
.mode { appearance: none; width: 113px; height: 23px; margin: 0 3px; padding: 0 4px; border: 0;
  background: #fff url("data:image/svg+xml,%3Csvg xmlns='http://www.w3.org/2000/svg' width='12' height='23'%3E%3Cpath d='M0 0h12v23H0z' fill='%23fafafa'/%3E%3Cpath d='M3 10h5l-2.500 3z'/%3E%3C/svg%3E") right center no-repeat; }
.main-tools .run { width: auto; padding-left: 6px; gap: 5px; }

/* Docked panels: three columns of tools around the map, output across the bottom */
.work { flex: 1; min-height: 0; display: grid; grid-template: minmax(0, 1fr) 209px / 276px 261px minmax(0, 1fr) 295px; gap: 7px 6px; padding: 12px 12px 12px 10px; }
.dock { display: flex; flex-direction: column; min-height: 0; padding-top: 1px; }
.dock:not(.output) { background: linear-gradient(#fff, #fff) 0 100% / 100% 60% no-repeat; }
.cap { display: flex; align-items: center; flex: none; height: 21px; margin: 0 1px; padding: 0 2px 2px 5px; background: #40568d; color: #fff; }
.cap h2 { flex: 1; }
.cap button { width: 14px; height: 18px; }
.conn { flex: none; height: 28px; padding: 7px 3px 0; background: #3b4248; color: #fff; }
.conn.top { padding-top: 0; }
.filter { flex: none; width: 100%; height: 23px; padding: 0 3px 2px; border: 1px solid #7a7a7a; background: #fff; }
.filter::placeholder { color: #5a5a5a; opacity: 1; }

.box { border: 1px solid #a0a0a0; background: #fff; overflow: hidden; }
.tree { display: grid; grid-template: minmax(0, 1fr) 17px / minmax(0, 1fr) 17px; border-color: #828790; padding: 1px; }
.library { flex: 1; min-height: 0; }
.columns { flex: 0 0 304px; }
.view { overflow: hidden; white-space: nowrap; min-height: 0; }
.vbar, .hbar { display: flex; background: #f0f0f0; }
.hbar { grid-column: 1 / -1; padding-right: 17px; }
.vbar { flex-direction: column; }
.vbar .ar { width: 10px; height: 17px; margin: 0 auto; }
.hbar .ar { width: 17px; height: 10px; margin: auto 0; }
.track { flex: 1; display: flex; min-height: 0; }
.track i { background: #cdcdcd; }
.vbar .track i { width: 100%; }
.idle { opacity: .5; background: #e4e4e4; }

.tree ul ul { padding-left: 19px; }
.node, .leaves li, .checks label { display: flex; align-items: center; height: 18px; gap: 5px; }
.ex { width: 10px; height: 10px; }
.node .ex { margin-right: 1px; }
.library .node { padding-left: 6px; }
.library .line { background: repeating-linear-gradient(#909090 0 1px, transparent 1px 2px) 10px 0 / 1px 100% no-repeat; }
.library .leaves { background: repeating-linear-gradient(#909090 0 1px, transparent 1px 2px) 30px 0 / 1px 100% no-repeat; }
.leaves li::before, .checks label::before { content: ""; flex: none; height: 1px; background: repeating-linear-gradient(90deg, #909090 0 1px, transparent 1px 2px); }
.leaves li { padding-left: 12px; }
.leaves li::before { width: 10px; margin-right: -5px; }
.columns .node { padding-left: 7px; }
.node label { display: flex; align-items: center; gap: 4px; }
.columns .checks { background: repeating-linear-gradient(#909090 0 1px, transparent 1px 2px) 32px 0 / 1px 100% no-repeat; }
.checks label { padding-left: 14px; gap: 4px; }
.checks label::before { width: 9px; margin-right: -4px; }
.pk { font-weight: 700; }

input[type="checkbox"] { appearance: none; flex: none; width: 13px; height: 13px; border: 1px solid #333; background: #fff; }
input[type="checkbox"]:checked { background: #fff url("data:image/svg+xml,%3Csvg xmlns='http://www.w3.org/2000/svg' width='11' height='11'%3E%3Cpath d='M1.500 5.500l2.500 2.500 5.500-5.500' fill='none' stroke='%23333' stroke-width='1.300'/%3E%3C/svg%3E") center no-repeat; }

.grid { flex: 1; min-height: 0; margin-top: 5px; display: grid; grid-template: minmax(0, 1fr) / minmax(0, 1fr) 17px; }
.props { width: 100%; table-layout: fixed; border-collapse: collapse; }
.props .g { width: 21px; }
.narrow .n { width: 94px; }
.medium .n { width: 112px; }
.wide .n { width: 360px; }
.props td, .props th { height: 19px; padding: 0 0 0 4px; line-height: 18px; border-bottom: 1px solid #f0f0f0; overflow: hidden; text-align: left; font-weight: 400; }
.props th { border-right: 1px solid #f0f0f0; }
.props td:last-child { font-weight: 700; }
.props td:first-child { background: #f4f4f4; border-color: #f4f4f4; }
.props .cat th { font-weight: 700; background: #f4f4f4; border-right: 0; }
.props .sel th { background: #f4f4f4; }
.props .ro th, .props .ro td { color: #6d6d6d; font-weight: 400; }
.desc { flex: none; height: 59px; margin-top: 3px; padding: 2px 5px; line-height: 15px; background: #f0f0f0; }
.desc h3 { font-size: 12px; line-height: 16px; margin-bottom: 2px; }

.centre { display: flex; flex-direction: column; min-height: 0; background: #f0f0f0; }
.tabs { display: flex; flex: none; height: 20px; border-bottom: 2px solid #f5cc84; background: #5d6b99; }
.tabs button { padding: 1px 6px 0; background: #364e6f; color: #fff; }
.tabs .on { padding: 1px 5px 0; background: #f5cc84; color: #000; font-weight: 700; }
.tabs .more { margin-left: auto; padding: 6px 3px 0; background: none; }
.labelled { padding-left: 3px; }
.labelled button { width: auto; padding: 0 10px 0 3px; gap: 3px; }
.labelled .sep { margin: 0 4px; }
.canvas { flex: 1; min-height: 0; overflow: hidden; border: 1px solid #a0a0a0; border-width: 1px 0 0 1px; background: #ababab; }

.map { width: 690px; table-layout: fixed; border-collapse: separate; border-spacing: 0; }
.map .c0 { width: 40px; }
.map .c1 { width: 150px; }
.map .c2 { width: 100px; }
.map td, .map th { height: 22px; padding: 0; background: #fff; border: 0 solid #a0a0a0; border-width: 0 1px 1px 0; text-align: center; }
.map thead th, .map thead td { height: 21px; padding: 1px 0 0 7px; font-weight: 400; text-align: left; border-right-color: #e0e0e0; }
.map tbody td:first-child { padding-left: 6px; border-bottom-color: #e0e0e0; }
.map tr td:first-child { border-right-color: #a0a0a0; }
.map .cur { background: #0078d7; }
.map input { display: block; margin: 0 auto; }
.map select { appearance: none; display: block; width: 100%; height: 21px; padding: 0 18px 0 2px; border: 1px solid #a8a8a8;
  background: #e1e1e1 url("data:image/svg+xml,%3Csvg xmlns='http://www.w3.org/2000/svg' width='17' height='19'%3E%3Cpath d='M.5 0v19' stroke='%23a0a0a0'/%3E%3Cpath d='M4.500 7.500l4 4 4-4' fill='none' stroke='%23444' stroke-width='1.200'/%3E%3C/svg%3E") right center no-repeat; }
.detail { flex: 0 0 160px; }

.output { grid-column: 1 / -1; padding-top: 0; }
.console { flex: 1; min-height: 0; display: grid; grid-template-columns: minmax(0, 1fr) 16px; background: #fff; }
.console pre { padding: 1px 9px; font: 12px/14px "DejaVu Sans Mono", monospace; overflow: hidden; }

.status { display: flex; align-items: center; flex: none; height: 22px; padding: 0 2px; background: #40508d; color: #fff; }
.grow { flex: 1; }
.status svg { margin-right: 5px; }
.status .bar { margin: 0 14px; }
.status svg:last-child { margin: 6px 0 0 6px; }
```
